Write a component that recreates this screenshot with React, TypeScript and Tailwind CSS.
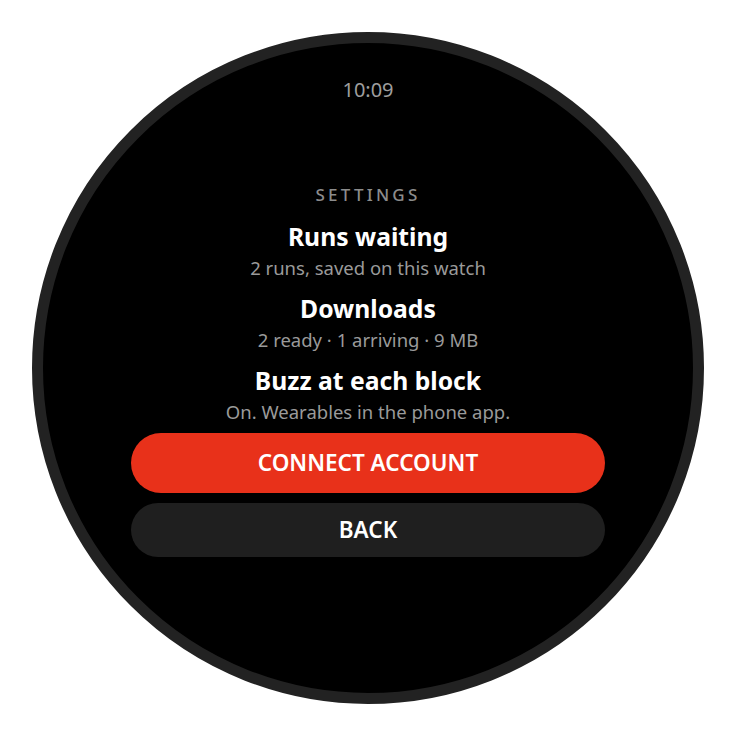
import React from "react";

const font = { fontFamily: '"Noto Sans", "Open Sans", sans-serif' };

function Item({ title, sub, first }: { title: string; sub: string; first?: boolean }) {
  return (
    <div className={`flex flex-col items-center ${first ? "mt-[15px]" : "mt-[13px]"}`}>
      <div className="text-[24.7px] leading-[30px] font-bold text-white">{title}</div>
      <div className="mt-[3px] text-[18.5px] leading-[26px] text-[#9a9a9a]">{sub}</div>
    </div>
  );
}

export default function App() {
  return (
    <div className="w-[736px] h-[736px] bg-white flex items-center justify-center" style={font}>
      <div className="w-[672px] h-[672px] rounded-full bg-black border-[11px] border-[#222222] flex flex-col items-center overflow-hidden">
        <div className="pt-[33px] text-[20px] leading-[28px] text-[#9e9e9e]">10:09</div>
        <div className="mt-[79px] text-[17px] leading-[24px] tracking-[0.19em] font-medium text-[#8c8c8c]">SETTINGS</div>
        <Item first title="Runs waiting" sub="2 runs, saved on this watch" />
        <Item title="Downloads" sub="2 ready · 1 arriving · 9 MB" />
        <Item title="Buzz at each block" sub="On. Wearables in the phone app." />
        <button className="mt-[8px] w-[474px] h-[60px] rounded-full bg-[#e8311a] text-white text-[22.5px] font-semibold flex items-center justify-center">
          CONNECT ACCOUNT
        </button>
        <button className="mt-[10px] w-[474px] h-[54px] rounded-full bg-[#1f1f1f] text-white text-[22.5px] font-semibold flex items-center justify-center">
          BACK
        </button>
      </div>
    </div>
  );
}
